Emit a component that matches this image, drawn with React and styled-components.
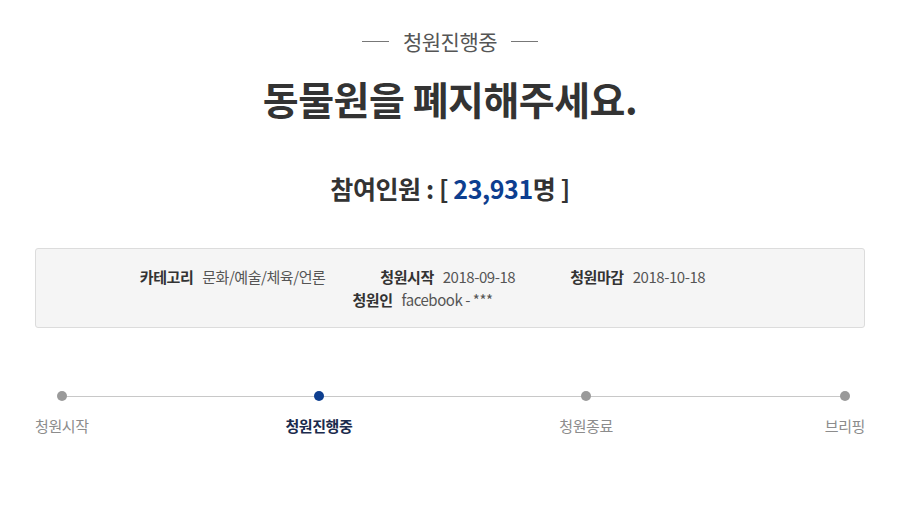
import React from 'react';
import styled, { createGlobalStyle } from 'styled-components';

const petition = {
  status: '청원진행중',
  title: '동물원을 폐지해주세요.',
  count: '23,931',
  rows: [
    [
      { label: '카테고리', value: '문화/예술/체육/언론' },
      { label: '청원시작', value: '2018-09-18' },
      { label: '청원마감', value: '2018-10-18' },
    ],
    [{ label: '청원인', value: 'facebook - ***' }],
  ],
  steps: [
    { name: '청원시작', align: 'flex-start' },
    { name: '청원진행중', align: 'center', active: true },
    { name: '청원종료', align: 'center' },
    { name: '브리핑', align: 'flex-end' },
  ],
};

const App = () => {
  return (
    <>
      <GlobalStyle />
      <Page>
        <Status>{petition.status}</Status>
        <Title>{petition.title}</Title>
        <Count>
          참여인원 : [ <Num>{petition.count}</Num>명 ]
        </Count>
        <InfoBox>
          {petition.rows.map((row, i) => (
            <InfoRow key={i}>
              {row.map((item) => (
                <InfoItem key={item.label}>
                  <InfoLabel>{item.label}</InfoLabel>
                  <InfoValue>{item.value}</InfoValue>
                </InfoItem>
              ))}
            </InfoRow>
          ))}
        </InfoBox>
        <Steps>
          {petition.steps.map((step) => (
            <Step key={step.name} $align={step.align}>
              <StepInner>
                <Dot $active={step.active} />
                <StepName $active={step.active}>{step.name}</StepName>
              </StepInner>
            </Step>
          ))}
        </Steps>
      </Page>
    </>
  );
};

export default App;

const GlobalStyle = createGlobalStyle`
  body {
    margin: 0;
    background: #fff;
    font-family: "Noto Sans CJK KR", "Noto Sans", sans-serif;
    color: #333;
  }
`;

const Page = styled.div`
  width: 830px;
  margin-left: 35px;
  padding-top: 26px;
  display: flex;
  flex-direction: column;
  align-items: center;
`;

const Status = styled.div`
  display: flex;
  align-items: center;
  gap: 14px;
  font-size: 21px;
  line-height: 30px;
  color: #555;
  letter-spacing: -0.5px;

  &::before,
  &::after {
    content: '';
    width: 27px;
    height: 1px;
    background: #777;
  }
`;

const Title = styled.h1`
  margin: 14px 0 0;
  font-size: 39px;
  line-height: 56px;
  font-weight: 700;
  color: #333;
  letter-spacing: -0.5px;
`;

const Count = styled.div`
  margin-top: 44px;
  font-size: 25px;
  line-height: 36px;
  font-weight: 700;
  color: #333;
  letter-spacing: -0.4px;
`;

const Num = styled.span`
  color: #0d3e8f;
`;

const InfoBox = styled.div`
  box-sizing: border-box;
  width: 100%;
  margin-top: 42px;
  padding: 16px 0 16px;
  background: #f5f5f5;
  border: 1px solid #dcdcdc;
  border-radius: 3px;
  display: flex;
  flex-direction: column;
`;

const InfoRow = styled.div`
  display: flex;
  justify-content: center;
  font-size: 15px;
  line-height: 23px;
  letter-spacing: -0.45px;
`;

const InfoItem = styled.div`
  display: flex;
  gap: 9px;
  margin-right: 55px;
`;

const InfoLabel = styled.span`
  font-weight: 700;
  color: #333;
`;

const InfoValue = styled.span`
  color: #555;
`;

const Steps = styled.div`
  width: 100%;
  margin-top: 63px;
  display: grid;
  grid-template-columns: auto 196fr auto 206fr auto 211fr auto;
  background: linear-gradient(#c8c8c8, #c8c8c8) no-repeat;
  background-size: calc(100% - 48px) 1px;
  background-position: 26px 5px;
`;

const Step = styled.div`
  display: flex;
  justify-content: ${(p) => p.$align};

  &:nth-child(2) { grid-column: 3; }
  &:nth-child(3) { grid-column: 5; }
  &:nth-child(4) { grid-column: 7; }
`;

const StepInner = styled.div`
  display: flex;
  flex-direction: column;
  align-items: center;
  gap: 15px;
`;

const Dot = styled.span`
  width: 10px;
  height: 10px;
  border-radius: 50%;
  background: ${(p) => (p.$active ? '#0d3e8f' : '#9a9a9a')};
`;

const StepName = styled.span`
  font-size: 15px;
  line-height: 20px;
  letter-spacing: -0.4px;
  color: ${(p) => (p.$active ? '#1b2b4d' : '#8c8c8c')};
  font-weight: ${(p) => (p.$active ? 700 : 400)};
`;
